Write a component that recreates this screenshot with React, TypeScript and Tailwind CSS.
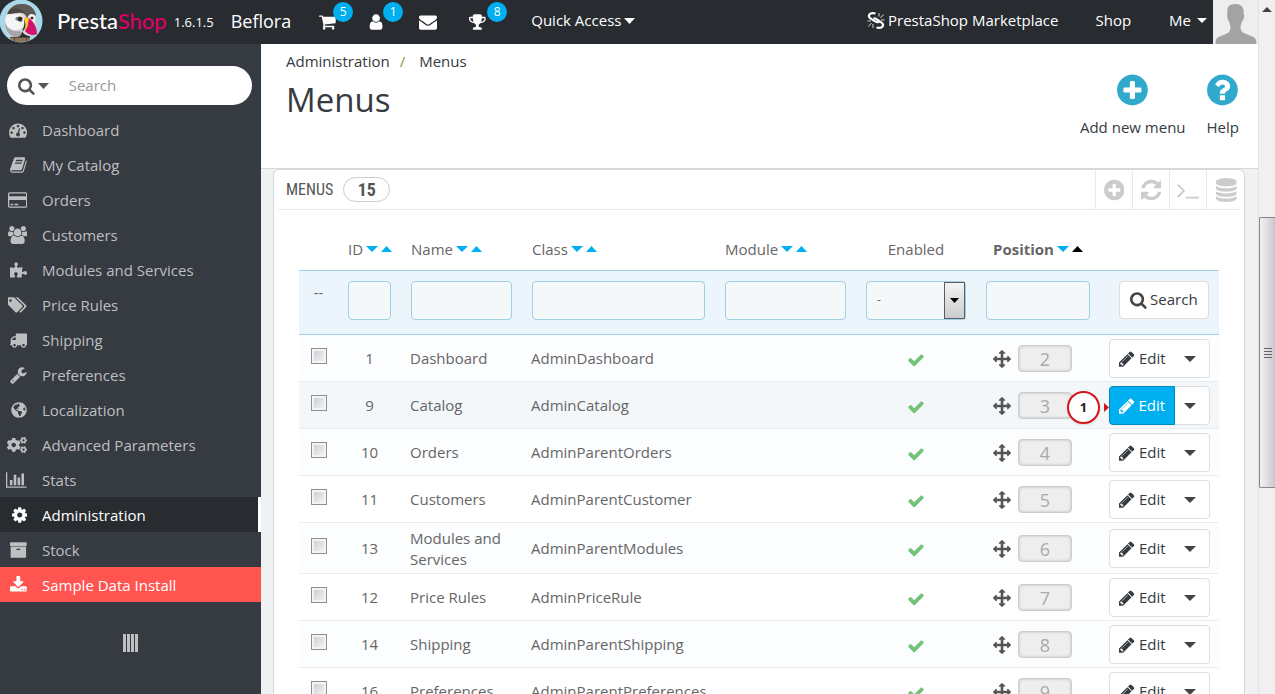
import { useState } from "react";
import { FaCogs, FaGlobeAmericas, FaPuzzlePiece } from "react-icons/fa";

// glyph = [left edge, width, path], all drawn on a 1792 high grid
type Glyph = [number, number, string];

const glyphs: Record<string, Glyph> = {
  search: [64, 1664, "M1216 832q0-185-131.5-316.5t-316.5-131.5-316.5 131.5-131.5 316.5 131.5 316.5 316.5 131.5 316.5-131.5 131.5-316.5zm512 832q0 52-38 90t-90 38q-54 0-90-38l-343-342q-179 124-399 124-143 0-273.5-55.5t-225-150-150-225-55.5-273.5 55.5-273.5 150-225 225-150 273.5-55.5 273.5 55.5 225 150 150 225 55.5 273.5q0 220-124 399l343 343q37 37 37 90z"],
  cart: [64, 1664, "M704 1536q0 52-38 90t-90 38-90-38-38-90 38-90 90-38 90 38 38 90zm896 0q0 52-38 90t-90 38-90-38-38-90 38-90 90-38 90 38 38 90zm128-1088v512q0 24-16.5 42.5t-40.5 21.5l-1044 122q13 60 13 70 0 16-24 64h920q26 0 45 19t19 45-19 45-45 19h-1024q-26 0-45-19t-19-45q0-11 8-31.5t16-36 21.5-40 15.5-29.5l-177-823h-204q-26 0-45-19t-19-45 19-45 45-19h256q16 0 28.5 6.5t19.5 15.5 13 24.5 8 26 5.5 29.5 4.5 26h1201q26 0 45 19t19 45z"],
  user: [192, 1408, "M1536 1399q0 109-62.5 187t-150.5 78h-854q-88 0-150.5-78t-62.5-187q0-85 8.5-160.5t31.5-152 58.5-131 94-89 134.5-34.5q131 128 313 128t313-128q76 0 134.5 34.5t94 89 58.5 131 31.5 152 8.5 160.5zm-256-887q0 159-112.5 271.5t-271.5 112.5-271.5-112.5-112.5-271.5 112.5-271.5 271.5-112.5 271.5 112.5 112.5 271.5z"],
  envelope: [0, 1792, "M1792 710v794q0 66-47 113t-113 47h-1472q-66 0-113-47t-47-113v-794q44 49 101 87 362 246 497 345 57 42 92.5 65.5t94.5 48 110 24.5h2q51 0 110-24.5t94.5-48 92.5-65.5q170-123 498-345 57-39 100-87zm0-294q0 79-49 151t-122 123q-376 261-468 325-10 7-42.5 31t-54 38.5-52 32.5-57.5 27-50 9h-2q-23 0-50-9t-57.5-27-52-32.5-54-38.5-42.5-31q-91-64-262-182.5t-205-142.5q-62-42-117-115.5t-55-136.5q0-78 41.5-130t118.5-52h1472q65 0 112.5 47t47.5 113z"],
  trophy: [64, 1664, "M522 883q-74-162-74-371h-256v96q0 78 94.5 162t235.5 113zm1078-275v-96h-256q0 209-74 371 141-29 235.5-113t94.5-162zm128-128v128q0 71-41.5 143t-112 130-173 97.5-215.5 44.5q-42 54-95 95-38 34-52.5 72.5t-14.5 89.5q0 54 30.5 91t97.5 37q75 0 133.5 45.5t58.5 114.5v64q0 14-9 23t-23 9h-832q-14 0-23-9t-9-23v-64q0-69 58.5-114.5t133.5-45.5q67 0 97.5-37t30.5-91q0-51-14.5-89.5t-52.5-72.5q-53-41-95-95-113-5-215.5-44.5t-173-97.5-112-130-41.5-143v-128q0-40 28-68t68-28h288v-96q0-66 47-113t113-47h576q66 0 113 47t47 113v96h288q40 0 68 28t28 68z"],
  dashboard: [0, 1792, "M384 1152q0-53-37.5-90.5t-90.5-37.5-90.5 37.5-37.5 90.5 37.5 90.5 90.5 37.5 90.5-37.5 37.5-90.5zm192-448q0-53-37.5-90.5t-90.5-37.5-90.5 37.5-37.5 90.5 37.5 90.5 90.5 37.5 90.5-37.5 37.5-90.5zm428 481l101-382q6-26-7.5-48.5t-38.5-29.5-48 6.5-30 39.5l-101 382q-60 5-107 43.5t-63 98.5q-20 77 20 146t117 89 146-20 89-117q16-60-6-117t-72-91zm660-33q0-53-37.5-90.5t-90.5-37.5-90.5 37.5-37.5 90.5 37.5 90.5 90.5 37.5 90.5-37.5 37.5-90.5zm-640-640q0-53-37.5-90.5t-90.5-37.5-90.5 37.5-37.5 90.5 37.5 90.5 90.5 37.5 90.5-37.5 37.5-90.5zm448 192q0-53-37.5-90.5t-90.5-37.5-90.5 37.5-37.5 90.5 37.5 90.5 90.5 37.5 90.5-37.5 37.5-90.5zm320 448q0 261-141 483-19 29-54 29h-1402q-35 0-54-29-141-221-141-483 0-182 71-348t191-286 286-191 348-71 348 71 286 191 191 286 71 348z"],
  book: [64, 1664, "M1703 478q40 57 18 129l-275 906q-19 64-76.5 107.5t-122.5 43.5h-923q-77 0-148.5-53.5t-99.5-131.5q-24-67-2-127 0-4 3-27t4-37q1-8-3-21.5t-3-19.5q2-11 8-21t16.5-23.5 16.5-23.5q23-38 45-91.5t30-91.5q3-10 .5-30t-.5-28q3-11 17-28t17-23q21-36 42-92t25-90q1-9-2.5-32t.5-28q4-13 22-30.5t22-22.5q19-26 42.5-84.5t27.5-96.5q1-8-3-25.5t-2-26.5q2-8 9-18t18-23 17-21q8-12 16.5-30.5t15-35 16-36 19.5-32 26.5-23.5 36-11.5 47.5 5.5l-1 3q38-9 51-9h761q74 0 114 56t18 130l-274 906q-36 119-71.5 153.5t-128.5 34.5h-869q-27 0-38 15-11 16-1 43 24 70 144 70h923q29 0 56-15.5t35-41.5l300-987q7-22 5-57 38 15 59 43zm-1064 2q-4 13 2 22.5t20 9.5h608q13 0 25.5-9.5t16.5-22.5l21-64q4-13-2-22.5t-20-9.5h-608q-13 0-25.5 9.5t-16.5 22.5zm-83 256q-4 13 2 22.5t20 9.5h608q13 0 25.5-9.5t16.5-22.5l21-64q4-13-2-22.5t-20-9.5h-608q-13 0-25.5 9.5t-16.5 22.5z"],
  card: [0, 1920, "M160 128h1600q66 0 113 47t47 113v1216q0 66-47 113t-113 47h-1600q-66 0-113-47t-47-113v-1216q0-66 47-113t113-47zm0 128q-32 0-32 32v224h1664v-224q0-32-32-32zM128 896v608q0 32 32 32h1600q32 0 32-32v-608zM256 1408v-128h256v128zM640 1408v-128h384v128z"],
  users: [0, 1920, "M593 896q-162 5-265 128h-134q-82 0-138-40.5t-56-118.5q0-353 124-353 6 0 43.5 21t97.5 42.5 119 21.5q67 0 133-23-5 37-5 66 0 159 90 256zm1071 637q0 120-73 189.5t-194 69.5h-874q-121 0-194-69.5t-73-189.5q0-53 3.5-103.5t14-109 26.5-108.5 43-97.5 62-81 85.5-53.5 111.5-20q10 0 43 21.5t73 48 107 48 135 21.5 135-21.5 107-48 73-48 43-21.5q61 0 111.5 20t85.5 53.5 62 81 43 97.5 26.5 108.5 14 109 3.5 103.5zm-1024-1277q0 106-75 181t-181 75-181-75-75-181 75-181 181-75 181 75 75 181zm704 384q0 159-112.5 271.5t-271.5 112.5-271.5-112.5-112.5-271.5 112.5-271.5 271.5-112.5 271.5 112.5 112.5 271.5zm576 225q0 78-56 118.5t-138 40.5h-134q-103-123-265-128 90-97 90-256 0-29-5-66 66 23 133 23 59 0 119-21.5t97.5-42.5 43.5-21q124 0 124 353zm-128-609q0 106-75 181t-181 75-181-75-75-181 75-181 181-75 181 75 75 181z"],
  tags: [0, 1856, "M384 448q0-53-37.5-90.5t-90.5-37.5-90.5 37.5-37.5 90.5 37.5 90.5 90.5 37.5 90.5-37.5 37.5-90.5zm1067 576q0 53-37 90l-491 492q-39 37-91 37-53 0-90-37l-715-716q-38-37-64.5-101t-26.5-117v-416q0-52 38-90t90-38h416q53 0 117 26.5t102 64.5l715 714q37 39 37 91zm384 0q0 53-37 90l-491 492q-39 37-91 37-36 0-59-14t-53-45l470-470q37-37 37-90 0-52-37-91l-715-714q-38-38-102-64.5t-117-26.5h224q53 0 117 26.5t102 64.5l715 714q37 39 37 91z"],
  truck: [64, 1728, "M640 1408q0-52-38-90t-90-38-90 38-38 90 38 90 90 38 90-38 38-90zm-384-512h384v-256h-158q-13 0-22 9l-195 195q-9 9-9 22v30zm1280 512q0-52-38-90t-90-38-90 38-38 90 38 90 90 38 90-38 38-90zm256-1088v1024q0 15-4 26.5t-13.5 18.5-16.5 11.5-23.5 6-22.5 2-25.5 0-22.5-.5q0 106-75 181t-181 75-181-75-75-181h-384q0 106-75 181t-181 75-181-75-75-181h-64q-3 0-22.5.5t-25.5 0-22.5-2-23.5-6-16.5-11.5-13.5-18.5-4-26.5q0-26 19-45t45-19v-320q0-8-.5-35t0-38 2.5-34.5 6.5-37 14-30.5 22.5-30l198-198q19-19 50.5-32t58.5-13h160v-192q0-26 19-45t45-19h1024q26 0 45 19t19 45z"],
  wrench: [64, 1664, "M448 1472q0-26-19-45t-45-19-45 19-19 45 19 45 45 19 45-19 19-45zm644-420l-682 682q-37 37-90 37-52 0-91-37l-106-108q-38-36-38-90 0-53 38-91l681-681q39 98 114.5 173.5t173.5 114.5zm634-435q0 39-23 106-47 134-164.5 217.5t-258.5 83.5q-185 0-316.5-131.5t-131.5-316.5 131.5-316.5 316.5-131.5q58 0 121.5 16.5t107.5 46.5q16 11 16 28t-16 28l-293 169v224l193 107q5-3 79-48.5t135.5-81 70.5-35.5q15 0 23.5 10t8.5 25z"],
  stats: [0, 2048, "M640 896v512h-256v-512h256zm384-512v1024h-256v-1024h256zm1024 1152v128h-2048v-1536h128v1408h1920zm-640-896v768h-256v-768h256zm384-384v1152h-256v-1152h256z"],
  cog: [128, 1536, "M1152 896q0-106-75-181t-181-75-181 75-75 181 75 181 181 75 181-75 75-181zm512-109v222q0 12-8 23t-20 13l-185 28q-19 54-39 91 35 50 107 138 10 12 10 25t-9 23q-27 37-99 108t-94 71q-12 0-26-9l-138-108q-44 23-91 38-16 136-29 186-7 28-36 28h-222q-14 0-24.5-8.5t-11.5-21.5l-28-184q-49-16-90-37l-141 107q-10 9-25 9-14 0-25-11-126-114-165-168-7-10-7-23 0-12 8-23 15-21 51-66.5t54-70.5q-27-50-41-99l-183-27q-13-2-21-12.5t-8-23.5v-222q0-12 8-23t19-13l186-28q14-46 39-92-40-57-107-138-10-12-10-24 0-10 9-23 26-36 98.5-107.5t94.5-71.5q13 0 26 10l138 107q44-23 91-38 16-136 29-186 7-28 36-28h222q14 0 24.5 8.5t11.5 21.5l28 184q49 16 90 37l142-107q9-9 24-9 13 0 25 10 129 119 165 170 7 8 7 22 0 12-8 23-15 21-51 66.5t-54 70.5q26 50 41 98l183 28q13 2 21 12.5t8 23.5z"],
  archive: [64, 1664, "M1088 832q0-26-19-45t-45-19h-256q-26 0-45 19t-19 45 19 45 45 19h256q26 0 45-19t19-45zm576-192v960q0 26-19 45t-45 19h-1408q-26 0-45-19t-19-45v-960q0-26 19-45t45-19h1408q26 0 45 19t19 45zm64-448v256q0 26-19 45t-45 19h-1536q-26 0-45-19t-19-45v-256q0-26 19-45t45-19h1536q26 0 45 19t19 45z"],
  download: [64, 1664, "M1344 1344q0-26-19-45t-45-19-45 19-19 45 19 45 45 19 45-19 19-45zm256 0q0-26-19-45t-45-19-45 19-19 45 19 45 45 19 45-19 19-45zm128-224v320q0 40-28 68t-68 28h-1472q-40 0-68-28t-28-68v-320q0-40 28-68t68-28h465l135 136q58 56 136 56t136-56l136-136h464q40 0 68 28t28 68zm-325-569q17 41-14 70l-448 448q-18 19-45 19t-45-19l-448-448q-31-29-14-70 17-39 59-39h256v-448q0-26 19-45t45-19h256q26 0 45 19t19 45v448h256q42 0 59 39z"],
  plus: [128, 1536, "M1344 960v-128q0-26-19-45t-45-19h-256v-256q0-26-19-45t-45-19h-128q-26 0-45 19t-19 45v256h-256q-26 0-45 19t-19 45v128q0 26 19 45t45 19h256v256q0 26 19 45t45 19h128q26 0 45-19t19-45v-256h256q26 0 45-19t19-45zm320-64q0 209-103 385.5t-279.5 279.5-385.5 103-385.5-103-279.5-279.5-103-385.5 103-385.5 279.5-279.5 385.5-103 385.5 103 279.5 279.5 103 385.5z"],
  question: [128, 1536, "M1024 1376v-192q0-14-9-23t-23-9h-192q-14 0-23 9t-9 23v192q0 14 9 23t23 9h192q14 0 23-9t9-23zm256-672q0-88-55.5-163t-138.5-116-170-41q-243 0-371 213-15 24 8 42l132 100q7 6 19 6 16 0 25-12 53-68 86-92 34-24 86-24 48 0 85.5 26t37.5 59q0 38-20 61t-68 45q-63 28-115.5 86.5t-52.5 125.5v36q0 14 9 23t23 9h192q14 0 23-9t9-23q0-19 21.5-49.5t54.5-49.5q32-18 49-28.5t46-35 44.5-48 28-60.5 12.5-81zm384 192q0 209-103 385.5t-279.5 279.5-385.5 103-385.5-103-279.5-279.5-103-385.5 103-385.5 279.5-279.5 385.5-103 385.5 103 279.5 279.5 103 385.5z"],
  refresh: [128, 1536, "M1639 1056q0 5-1 7-64 268-268 434.5t-478 166.5q-146 0-282.5-55t-243.5-157l-129 129q-19 19-45 19t-45-19-19-45v-448q0-26 19-45t45-19h448q26 0 45 19t19 45-19 45l-137 137q71 66 161 102t187 36q134 0 250-65t186-179q11-17 53-117 8-23 30-23h192q13 0 22.5 9.5t9.5 22.5zm25-800v448q0 26-19 45t-45 19h-448q-26 0-45-19t-19-45 19-45l138-138q-148-137-349-137-134 0-250 65t-186 179q-11 17-53 117-8 23-30 23h-199q-13 0-22.5-9.5t-9.5-22.5v-7q65-268 270-434.5t480-166.5q146 0 284 55.5t245 156.5l130-129q19-19 45-19t45 19 19 45z"],
  terminal: [64, 1664, "M649 983l-466 466q-10 10-23 10t-23-10l-50-50q-10-10-10-23t10-23l393-393-393-393q-10-10-10-23t10-23l50-50q10-10 23-10t23 10l466 466q10 10 10 23t-10 23zm1079 457v64q0 14-9 23t-23 9h-960q-14 0-23-9t-9-23v-64q0-14 9-23t23-9h960q14 0 23 9t9 23z"],
  database: [128, 1536, "M896 768q237 0 443-43t325-127v170q0 69-103 128t-280 93.5-385 34.5-385-34.5-280-93.5-103-128v-170q119 84 325 127t443 43zm0 768q237 0 443-43t325-127v170q0 69-103 128t-280 93.5-385 34.5-385-34.5-280-93.5-103-128v-170q119 84 325 127t443 43zm0-384q237 0 443-43t325-127v170q0 69-103 128t-280 93.5-385 34.5-385-34.5-280-93.5-103-128v-170q119 84 325 127t443 43zm0-1152q208 0 385 34.5t280 93.5 103 128v128q0 69-103 128t-280 93.5-385 34.5-385-34.5-280-93.5-103-128v-128q0-69 103-128t280-93.5 385-34.5z"],
  check: [0, 1792, "M1671 566q0 40-28 68l-724 724-136 136q-28 28-68 28t-68-28l-136-136-362-362q-28-28-28-68t28-68l136-136q28-28 68-28t68 28l294 295 656-657q28-28 68-28t68 28l136 136q28 28 28 68z"],
  arrows: [0, 1792, "M1792 896q0 26-19 45l-256 256q-19 19-45 19t-45-19-19-45v-128h-384v384h128q26 0 45 19t19 45-19 45l-256 256q-19 19-45 19t-45-19l-256-256q-19-19-19-45t19-45 45-19h128v-384h-384v128q0 26-19 45t-45 19-45-19l-256-256q-19-19-19-45t19-45l256-256q19-19 45-19t45 19 19 45v128h384v-384h-128q-26 0-45-19t-19-45 19-45l256-256q19-19 45-19t45 19l256 256q19 19 19 45t-19 45-45 19h-128v384h384v-128q0-26 19-45t45-19 45 19l256 256q19 19 19 45z"],
  pencil: [128, 1536, "M491 1536l91-91-235-235-91 91v107h128v128h107zm523-928q0-22-22-22-10 0-17 7l-542 542q-7 7-7 17 0 22 22 22 10 0 17-7l542-542q7-7 7-17zm-54-192l416 416-832 832h-416v-416zm683 96q0 53-37 90l-166 166-416-416 166-165q36-38 90-38 53 0 91 38l235 234q37 39 37 91z"],
};

const Icon = ({ name, className = "" }: { name: string; className?: string }) => {
  const [left, width, path] = glyphs[name];
  return (
    <svg viewBox={`${left} 0 ${width} 1792`} className={`w-auto shrink-0 ${className}`} fill="currentColor" fillRule={name === "card" ? "evenodd" : "nonzero"} aria-hidden="true">
      <path d={path} />
    </svg>
  );
};

const Caret = ({ up = false, className = "" }: { up?: boolean; className?: string }) => (
  <svg viewBox="0 0 12 6" preserveAspectRatio="none" className={`shrink-0 ${className}`} fill="currentColor" aria-hidden="true">
    <path d={up ? "M0 6h12L6 0z" : "M0 0h12L6 6z"} />
  </svg>
);

const Puffin = () => (
  <svg viewBox="0 0 43 43" className="h-[43px] w-[43px] shrink-0 self-start" aria-hidden="true">
    <clipPath id="disc"><circle cx="21" cy="21" r="21" /></clipPath>
    <circle cx="21" cy="21" r="21.5" fill="#a9d9e8" />
    <g clipPath="url(#disc)">
      <path d="M5 25C4 12 11 4 21 4c9 0 15 6 15 15 0 8-2 14-6 18H12C8 35 5 31 5 25z" fill="#d9dadc" />
      <path d="M7 14C10 7 15 4 22 4c8 0 13 5 14 12-3-3-7-3-9 1-2-4-6-5-9-4-4 1-7 1-11 1z" fill="#4a4744" />
      <path d="M10 10c5-3 12-2 15 4l2 4 3-4c2-2 5-1 6 2-1-8-7-12-14-12-5 0-9 2-12 6z" fill="#5f5a55" />
      <path d="M6 16c4-3 10-3 13-2 4 1 6 5 5 10-2 6-8 7-13 5-4-2-7-7-5-13z" fill="#f4f4f5" />
      <path d="M5 23c2 6 8 9 15 8l4 4c-2 2-6 3-10 2-6-2-9-8-9-14z" fill="#a3a5a9" />
      <path d="M28 17c2-4 6-3 7 0l-1 6-5-3z" fill="#f4f4f5" />
      <path d="M15 19c2-3 6-3 8-1l-1 4c-3 0-5-1-7-3z" fill="#77787a" />
      <circle cx="20" cy="19" r="2" fill="#222" />
      <circle cx="32" cy="18" r="1.500" fill="#333" />
      <path d="M24 20c1-3 4-3 6-1 4 3 7 9 7 15-4 2-9 1-12-3 2-3 2-7-1-11z" fill="#d5126a" />
      <path d="M24 19c1-2 4-2 5 0-1 3-1 6-2 9l-3 2c2-4 2-7 0-11z" fill="#fbd227" />
      <path d="M24 20c2 3 2 6 0 10l-2 1c2-4 3-7 2-11z" fill="#2b2b2d" />
      <path d="M22 31c1 3 5 5 9 5l-2 1H18c3-1 4-3 4-6z" fill="#2b2b2d" />
      <path d="M10 37h20v6H10z" fill="#8a7459" />
      <path d="M10 37h20v1H10zM14 38h1v5h-1zM26 38h1v5h-1z" fill="#5b4a36" />
    </g>
  </svg>
);

const MarketIcon = () => (
  <svg viewBox="0 0 18 17" className="h-[17px] w-[18px]" fill="none" stroke="#fff" aria-hidden="true">
    <path d="M8.500 1.500C5 .5 1.500 1.500 2 4.500c.3 2 2 2 4 3.500 2 1.500 3.500 3 6 2" strokeWidth="2.200" />
    <path d="M9.500 15.500c3.500 1 7 0 6.500-3-.3-2-2-2-4-3.500-2-1.500-3-3-5.500-2.500" strokeWidth="2.200" />
    <path d="M12 4.500V1M13.500 6l3-3.500M14 8h3.500M6 12v4M4.500 11l-3 3.500M4 9H.5" strokeWidth="1" stroke="#d6ddc8" />
  </svg>
);

const sidebar = [
  { label: "Dashboard", icon: <Icon name="dashboard" className="h-[18px]" /> },
  { label: "My Catalog", icon: <Icon name="book" className="h-[18px]" /> },
  { label: "Orders", icon: <Icon name="card" className="h-[18px]" /> },
  { label: "Customers", icon: <Icon name="users" className="h-[18px]" /> },
  { label: "Modules and Services", icon: <FaPuzzlePiece className="h-4 w-[17px]" /> },
  { label: "Price Rules", icon: <Icon name="tags" className="h-[18px]" /> },
  { label: "Shipping", icon: <Icon name="truck" className="h-[18px]" /> },
  { label: "Preferences", icon: <Icon name="wrench" className="h-[18px]" /> },
  { label: "Localization", icon: <FaGlobeAmericas className="size-4" /> },
  { label: "Advanced Parameters", icon: <FaCogs className="h-[18px] w-5" /> },
  { label: "Stats", icon: <Icon name="stats" className="h-[18px]" /> },
  { label: "Administration", icon: <Icon name="cog" className="h-[18px]" /> },
  { label: "Stock", icon: <Icon name="archive" className="h-[18px]" /> },
  { label: "Sample Data Install", icon: <Icon name="download" className="h-[18px]" /> },
];

const menus = [
  { id: 1, name: "Dashboard", cls: "AdminDashboard", position: 2 },
  { id: 9, name: "Catalog", cls: "AdminCatalog", position: 3 },
  { id: 10, name: "Orders", cls: "AdminParentOrders", position: 4 },
  { id: 11, name: "Customers", cls: "AdminParentCustomer", position: 5 },
  { id: 13, name: "Modules and Services", cls: "AdminParentModules", position: 6 },
  { id: 12, name: "Price Rules", cls: "AdminPriceRule", position: 7 },
  { id: 14, name: "Shipping", cls: "AdminParentShipping", position: 8 },
  { id: 16, name: "Preferences", cls: "AdminParentPreferences", position: 9 },
];

const HeaderIcon = ({ name, label, count }: { name: string; label: string; count?: number }) => (
  <a href="#" aria-label={label} className="relative flex w-[50px] items-center">
    <Icon name={name} className="h-[18px]" />
    {count && (
      <span className={`absolute -top-[11px] flex size-5 items-center justify-center rounded-full bg-[#00aff0] text-xs ${name === "trophy" ? "left-[18px]" : "left-[14px]"}`}>
        {count}
      </span>
    )}
  </a>
);

const Header = () => (
  <header className="flex h-11 shrink-0 items-center bg-[#282b30] pb-[3px] text-white">
    <Puffin />
    <a href="#" className="ml-3.5 font-[Lato,sans-serif] text-[22px] font-medium">
      Presta<span className="text-[#df0067]">Shop</span>
    </a>
    <span className="ml-[7px] pt-1 text-[13px]">1.6.1.5</span>
    <a href="#" className="ml-[17px] text-lg">Beflora</a>
    <nav className="mt-[3px] ml-7 flex">
      <HeaderIcon name="cart" label="Orders" count={5} />
      <HeaderIcon name="user" label="Customers" count={1} />
      <HeaderIcon name="envelope" label="Messages" />
      <HeaderIcon name="trophy" label="Badges" count={8} />
    </nav>
    <button className="ml-3 flex items-center gap-[3px]">
      Quick Access <Caret className="h-[6px] w-[11px]" />
    </button>
    <div className="ml-auto flex items-center">
      <a href="#" className="flex items-center gap-[3px]"><MarketIcon />PrestaShop Marketplace</a>
      <a href="#" className="ml-[37px]">Shop</a>
      <button className="mr-1.5 ml-[38px] flex items-center gap-1.5">Me <Caret className="h-[5px] w-[10px]" /></button>
    </div>
    <svg viewBox="0 0 44 44" className="h-11 w-[45px] self-start bg-[#eee]" role="img" aria-label="Profile">
      <path d="M22 4c6 0 9 4 8 10 1 0 1 2 0 5-.5 2-1 2-1.500 2-.5 3-1.500 4-1.500 6 0 5 3 6 8 8 6 2 8 3 8 9H2c0-6 2-7 8-9 5-2 7-3 7-8 0-2-1-3-1.500-6-1 0-1-1-1.500-3-.5-3-.5-4 0-5-1-6 2-9 8-9z" fill="#a3a3a3" />
    </svg>
  </header>
);

const Sidebar = () => (
  <aside className="w-[261px] shrink-0 bg-[#363a41] text-[#bebfc1]">
    <form className="mx-[7px] mr-[9px] mt-[22px] mb-[7px] flex h-[39px] items-center rounded-full bg-white pl-[11px] text-[#555]">
      <button type="button" aria-label="Search in" className="flex items-center gap-[3px]">
        <Icon name="search" className="h-[18px]" />
        <Caret className="h-[6px] w-[11px]" />
      </button>
      <input type="text" aria-label="Search" placeholder="Search" className="ml-5 w-0 flex-1 outline-none placeholder:text-[#999]" />
    </form>
    <nav>
      {sidebar.map(item => (
        <a
          key={item.label}
          href="#"
          className={`flex h-[35px] items-center ${
            item.label === "Administration" ? "border-r-3 border-white bg-[#282b30] text-white"
              : item.label === "Sample Data Install" ? "bg-[#ff5450] text-white" : ""
          }`}
        >
          <span className="mr-[15px] flex w-[27px] justify-end">{item.icon}</span>
          <span className="pt-0.5">{item.label}</span>
        </a>
      ))}
    </nav>
    <button aria-label="Collapse menu" className="mx-auto mt-8 flex h-[18px] w-[15px] gap-px">
      {[0, 1, 2, 3].map(bar => <span key={bar} className="h-full w-[3px] bg-[#bebfc1]" />)}
    </button>
  </aside>
);

const Sort = ({ label, active = false }: { label: string; active?: boolean }) => (
  <span className="inline-flex items-center gap-[3px]">
    {label}
    <button aria-label={`Sort ${label} descending`} className="text-[#00aff0]"><Caret className="h-[6px] w-3" /></button>
    <button aria-label={`Sort ${label} ascending`} className={active ? "text-black" : "text-[#00aff0]"}><Caret up className="h-[6px] w-[11px]" /></button>
  </span>
);

const filterBox = "block h-[39px] w-full rounded border border-[#a0d0e4] bg-[#f5f8f9] outline-none";

const MenusTable = () => {
  const [checked, setChecked] = useState<number[]>([]);

  const toggle = (id: number) => {
    setChecked(checked.includes(id) ? checked.filter(item => item !== id) : [...checked, id]);
  }

  return (
    <table className="w-full table-fixed text-[#666]">
      <thead>
        <tr className="h-[42px] text-left">
          <th className="w-[39px]"></th>
          <th className="w-[63px] pl-[10px] font-normal"><Sort label="ID" /></th>
          <th className="w-[121px] px-[10px] font-normal"><Sort label="Name" /></th>
          <th className="px-[10px] font-normal"><Sort label="Class" /></th>
          <th className="w-[141px] px-[10px] font-normal"><Sort label="Module" /></th>
          <th className="w-[120px] text-center font-normal">Enabled</th>
          <th className="w-[124px] text-center font-bold"><Sort label="Position" active /></th>
          <th className="w-[119px]"></th>
        </tr>
        <tr className="h-16 border-y border-[#a0d0e4] bg-[#ebf5fb] align-top">
          <td className="pt-[10px] text-center">--</td>
          <td className="px-[10px] pt-[10px]"><input aria-label="Filter ID" className={filterBox} /></td>
          <td className="px-[10px] pt-[10px]"><input aria-label="Filter name" className={filterBox} /></td>
          <td className="px-[10px] pt-[10px]"><input aria-label="Filter class" className={filterBox} /></td>
          <td className="px-[10px] pt-[10px]"><input aria-label="Filter module" className={filterBox} /></td>
          <td className="px-[10px] pt-[10px]">
            <div className="relative">
              <select aria-label="Filter enabled" className={`${filterBox} appearance-none pl-[10px] text-xs`}>
                <option>-</option>
                <option>Yes</option>
                <option>No</option>
              </select>
              <span className="pointer-events-none absolute inset-y-px right-px flex w-[21px] items-center justify-center border border-[#555f66] bg-linear-to-b from-[#f4f4f4] to-[#ccc] text-black">
                <Caret className="h-[5px] w-[9px]" />
              </span>
            </div>
          </td>
          <td className="px-[10px] pt-[10px]"><input aria-label="Filter position" className={filterBox} /></td>
          <td className="pt-[10px] pr-[10px]">
            <button className="ml-auto flex h-[38px] w-[90px] items-center justify-center gap-[3px] rounded border border-[#dedede] bg-white text-[#363a41]">
              <Icon name="search" className="h-[18px] text-[#444]" />Search
            </button>
          </td>
        </tr>
      </thead>
      <tbody>
        {menus.map((menu, index) => {
          const current = menu.name === "Catalog";
          return (
            <tr key={menu.id} className={`h-[47px] border-b border-[#eaedef] ${current ? "bg-[#f3f7fa]" : index % 2 === 0 ? "bg-[#fcfdfe]" : "bg-white"}`}>
              <td className="pb-1">
                <input
                  type="checkbox"
                  aria-label={`Select ${menu.name}`}
                  checked={checked.includes(menu.id)}
                  onChange={() => toggle(menu.id)}
                  className="mx-auto block size-4 appearance-none border border-[#8e8f8f] bg-linear-to-br from-[#c8ccd0] to-[#f6f6f6] shadow-[inset_0_0_0_2px_#f4f4f4] checked:bg-[#00aff0]"
                />
              </td>
              <td className="pt-0.5 text-center">{menu.id}</td>
              <td className="pt-[5px] pb-[3px] pl-[9px] leading-[21px]">{menu.name}</td>
              <td className="pt-0.5 pl-[9px]">{menu.cls}</td>
              <td></td>
              <td className="pt-1"><Icon name="check" className="mx-auto h-[18px] text-[#72c279]" /></td>
              <td className="pt-0.5 pl-[17px]">
                <div className="flex items-center gap-[7px]">
                  <Icon name="arrows" className="h-[18px] text-[#555]" />
                  <span className="flex h-[27px] w-[54px] items-center justify-center rounded border border-[#ccc] bg-[#eee] text-lg text-[#aaa] shadow-[inset_0_0_3px_#bbb]">
                    {menu.position}
                  </span>
                </div>
              </td>
              <td className="pt-0.5 pr-[9px]">
                <div className="relative ml-auto flex h-[39px] w-[101px] rounded border border-[#dedede] bg-white text-[#363a41]">
                  <button className={`flex flex-1 items-center justify-center gap-1 ${current ? "-my-px -ml-px rounded-l border border-[#008abd] bg-[#00aff0] text-white" : ""}`}>
                    <Icon name="pencil" className="h-[18px]" />Edit
                  </button>
                  <button aria-label={`More actions for ${menu.name}`} className="flex w-[34px] items-center pl-[9px] text-[#444]">
                    <Caret className="h-[6px] w-3" />
                  </button>
                  {current && (
                    <span className="absolute top-1 right-full flex items-center gap-1 pr-px">
                      <span className="flex size-[33px] items-center justify-center rounded-full border-2 border-[#d3141c] bg-white text-[13px] font-bold text-[#222] shadow-sm">1</span>
                      <svg viewBox="0 0 5 9" className="h-[9px] w-[5px]" fill="#d3141c" aria-hidden="true"><path d="M0 0l5 4.500L0 9z" /></svg>
                    </span>
                  )}
                </div>
              </td>
            </tr>
          );
        })}
      </tbody>
    </table>
  );
}

const tools = [
  { icon: "plus", label: "Add new" },
  { icon: "refresh", label: "Refresh list" },
  { icon: "terminal", label: "Show SQL query" },
  { icon: "database", label: "Export to SQL Manager" },
];

export default () => (
  <div className="flex h-screen overflow-hidden font-['Open_Sans',sans-serif] text-[15px] text-[#363a41]">
    <div className="flex min-w-0 flex-1 flex-col">
      <Header />
      <div className="flex min-h-0 flex-1">
        <Sidebar />
        <main className="min-w-0 flex-1 bg-[#eff1f2]">
          <div className="flex h-[125px] justify-between border-b border-[#d6d8da] bg-white pr-[19px] pl-[25px]">
            <div>
              <nav aria-label="Breadcrumb" className="mt-1.5 flex">
                <a href="#">Administration</a>
                <span className="mr-[14px] ml-[10px] text-[#72a040]">/</span>
                <a href="#">Menus</a>
              </nav>
              <h1 className="mt-1 text-[33px] leading-[46px]">Menus</h1>
            </div>
            <div className="flex items-start gap-[21px] pt-7">
              <a href="#" className="flex flex-col items-center gap-2">
                <Icon name="plus" className="h-9 text-[#31a9cd]" />Add new menu
              </a>
              <a href="#" className="flex flex-col items-center gap-2">
                <Icon name="question" className="h-9 text-[#31a9cd]" />Help
              </a>
            </div>
          </div>
          <section className="mx-3 mr-[13px] rounded-t-md border border-[#d6d8da] bg-white px-1">
            <div className="flex h-10 items-center border-b border-[#e8eaeb] pl-2 font-['Ubuntu_Condensed','Roboto_Condensed','Open_Sans',sans-serif] text-[#555]">
              <h2 className="text-base">MENUS</h2>
              <span className="ml-[10px] flex h-[25px] w-[47px] items-center justify-center rounded-full border border-[#ccc] text-lg font-bold">15</span>
              <div className="ml-auto flex h-full text-[#ccc]">
                {tools.map(tool => (
                  <button key={tool.icon} aria-label={tool.label} className="flex w-[37px] items-center justify-center border-l border-[#e8eaeb] last:w-[34px] last:pl-1.5">
                    <Icon name={tool.icon} className="h-6" />
                  </button>
                ))}
              </div>
            </div>
            <div className="px-[21px] pt-[18px]">
              <MenusTable />
            </div>
          </section>
        </main>
      </div>
    </div>
    {/* page scrollbar */}
    <div className="flex w-[17px] shrink-0 flex-col border-l border-[#e2e2e2] bg-[#f0f0f0]">
      <Caret up className="mt-[7px] ml-[3px] h-[5px] w-[10px] text-[#444]" />
      <div className="mt-[205px] flex h-[271px] flex-col items-center justify-center gap-0.5 rounded-l-xs border border-r-0 border-[#888] bg-linear-to-r from-[#f4f4f4] to-[#c8c8cc]">
        {[0, 1, 2, 3].map(line => <span key={line} className="h-px w-2 bg-[#666]" />)}
      </div>
    </div>
  </div>
);
